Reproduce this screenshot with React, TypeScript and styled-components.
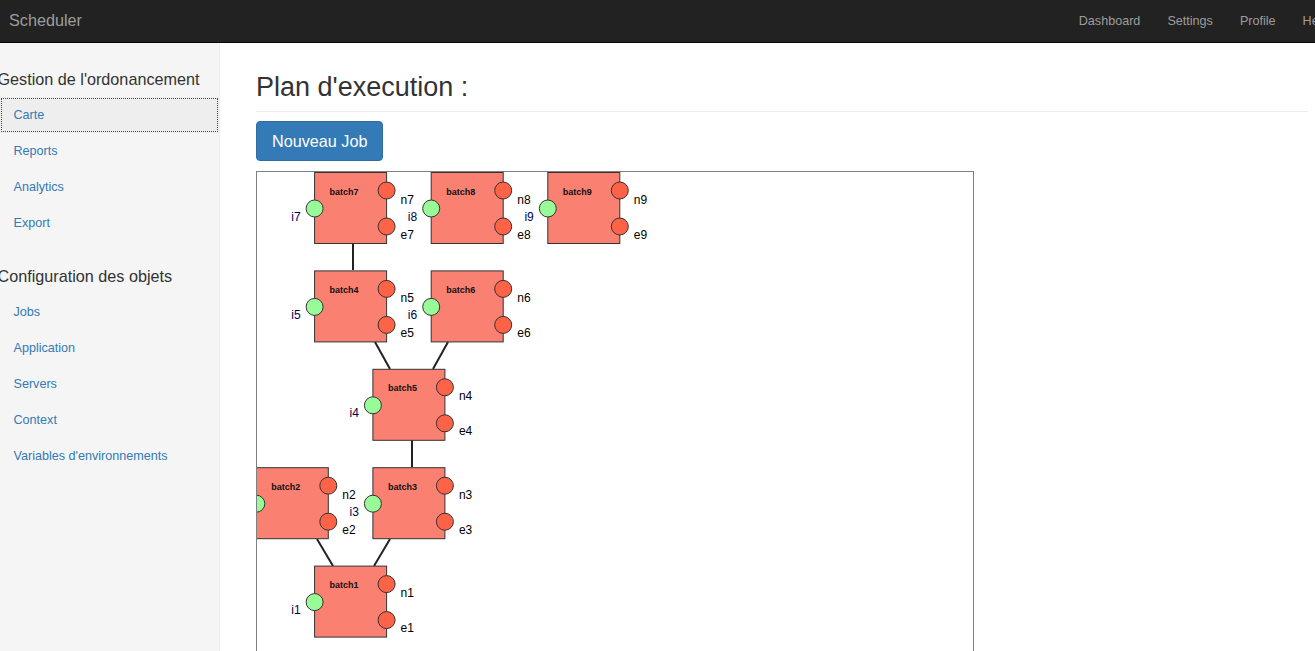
import React from "react";
import styled, { createGlobalStyle } from "styled-components";

const GlobalStyle = createGlobalStyle`
  html, body {
    margin: 0;
    padding: 0;
    overflow: hidden;
    background: #fff;
  }
  body {
    font-family: "Liberation Sans", Arial, sans-serif;
    font-size: 12.6px;
    color: #333;
  }
`;

type Node = {
  name: string;
  col: number;
  row: number;
  idx: number;
};

const COL = 58.3;
const ROW = 98.4;

const nodes: Node[] = [
  { name: "batch7", col: 1, row: 0, idx: 7 },
  { name: "batch8", col: 3, row: 0, idx: 8 },
  { name: "batch9", col: 5, row: 0, idx: 9 },
  { name: "batch4", col: 1, row: 1, idx: 5 },
  { name: "batch6", col: 3, row: 1, idx: 6 },
  { name: "batch5", col: 2, row: 2, idx: 4 },
  { name: "batch2", col: 0, row: 3, idx: 2 },
  { name: "batch3", col: 2, row: 3, idx: 3 },
  { name: "batch1", col: 1, row: 4, idx: 1 },
];

const links = [
  [96, 71, 96, 98],
  [118, 170, 133, 197],
  [191, 170, 176, 197],
  [155, 268, 155, 295],
  [60, 367, 76, 394],
  [133, 367, 117, 394],
];

const menuTop = ["Carte", "Reports", "Analytics", "Export"];
const menuObjects = [
  "Jobs",
  "Application",
  "Servers",
  "Context",
  "Variables d'environnements",
];

const Page = styled.div`
  width: 1344px;
  height: 651px;
  display: flex;
  flex-direction: column;
`;

const TopBar = styled.div`
  height: 43px;
  background: #222;
  border-bottom: 1px solid #080808;
  box-sizing: border-box;
  display: flex;
  align-items: center;
  justify-content: space-between;
`;

const Brand = styled.div`
  padding-left: 9px;
  font-size: 16.2px;
  color: #9d9d9d;
  margin-top: -2px;
`;

const TopLinks = styled.div`
  display: flex;
  margin-top: -1px;
  margin-right: 2px;
`;

const TopLink = styled.a`
  padding: 0 13.5px;
  color: #9d9d9d;
  font-size: 12.6px;
  text-decoration: none;
`;

const Body = styled.div`
  flex: 1;
  display: flex;
  min-height: 0;
`;

const Sidebar = styled.div`
  width: 220px;
  box-sizing: border-box;
  background: #f5f5f5;
  border-right: 1px solid #eee;
  padding-top: 27px;
`;

const SideTitle = styled.div`
  font-size: 16.2px;
  line-height: 18px;
  color: #333;
  margin: 0 0 9px -2.5px;
  white-space: nowrap;
`;

const SideList = styled.div`
  margin-bottom: 26px;
`;

const SideItem = styled.a<{ $active?: boolean }>`
  display: block;
  height: 36px;
  line-height: 36px;
  padding-left: 13.5px;
  color: #337ab7;
  text-decoration: none;
  font-size: 12.6px;
  background: ${(p) => (p.$active ? "#eee" : "transparent")};
  outline: ${(p) => (p.$active ? "1px dotted #1f4f7f" : "none")};
  outline-offset: -2px;
`;

const Main = styled.div`
  flex: 1;
  padding: 0 36px;
  min-width: 0;
`;

const Header = styled.h2`
  margin: 29.5px 0 9px;
  padding-bottom: 9px;
  border-bottom: 1px solid #eee;
  font-size: 27px;
  font-weight: 400;
  line-height: 1.1;
  color: #333;
`;

const NewButton = styled.button`
  height: 40px;
  padding: 0 15px;
  font-family: "Liberation Sans", Arial, sans-serif;
  font-size: 16.2px;
  color: #fff;
  background: #337ab7;
  border: 1px solid #2e6da4;
  border-radius: 4px;
  cursor: pointer;
`;

const Canvas = styled.div`
  margin-top: 10px;
  width: 718px;
  height: 520px;
  box-sizing: border-box;
  border: 1px solid #808080;
  overflow: hidden;
  background: #fff;
  svg {
    display: block;
  }
`;

function Diagram() {
  return (
    <svg width={716} height={518} viewBox="0 0 716 518">
      {links.map(([x1, y1, x2, y2], i) => (
        <line key={i} x1={x1} y1={y1} x2={x2} y2={y2} stroke="#222" strokeWidth={2} />
      ))}
      {nodes.map((n) => {
        const x = -0.7 + n.col * COL;
        const y = 0.5 + n.row * ROW;
        return (
          <g key={n.name} fontFamily="'Liberation Sans', Arial, sans-serif">
            <rect x={x} y={y} width={72} height={71} fill="#fa8072" stroke="#333" strokeWidth={1} />
            <text x={x + 15} y={y + 22} fontSize={9} fontWeight={700} fill="#111">
              {n.name}
            </text>
            <circle cx={x} cy={y + 36} r={8.5} fill="#98fb98" stroke="#333" strokeWidth={1} />
            <circle cx={x + 72} cy={y + 18} r={8.5} fill="#ff6347" stroke="#333" strokeWidth={1} />
            <circle cx={x + 72} cy={y + 54} r={8.5} fill="#ff6347" stroke="#333" strokeWidth={1} />
            <text x={x - 14} y={y + 48} fontSize={12} textAnchor="end" fill="#000050">
              i{n.idx}
            </text>
            <text x={x + 86} y={y + 31} fontSize={12} fill="#000">
              n{n.idx}
            </text>
            <text x={x + 86} y={y + 66} fontSize={12} fill="#000">
              e{n.idx}
            </text>
          </g>
        );
      })}
    </svg>
  );
}

export default function App() {
  return (
    <Page>
      <GlobalStyle />
      <TopBar>
        <Brand>Scheduler</Brand>
        <TopLinks>
          <TopLink>Dashboard</TopLink>
          <TopLink>Settings</TopLink>
          <TopLink>Profile</TopLink>
          <TopLink>Help</TopLink>
        </TopLinks>
      </TopBar>
      <Body>
        <Sidebar>
          <SideTitle>Gestion de l'ordonancement</SideTitle>
          <SideList>
            {menuTop.map((m, i) => (
              <SideItem key={m} $active={i === 0}>
                {m}
              </SideItem>
            ))}
          </SideList>
          <SideTitle>Configuration des objets</SideTitle>
          <SideList>
            {menuObjects.map((m) => (
              <SideItem key={m}>{m}</SideItem>
            ))}
          </SideList>
        </Sidebar>
        <Main>
          <Header>Plan d'execution :</Header>
          <NewButton>Nouveau Job</NewButton>
          <Canvas>
            <Diagram />
          </Canvas>
        </Main>
      </Body>
    </Page>
  );
}
